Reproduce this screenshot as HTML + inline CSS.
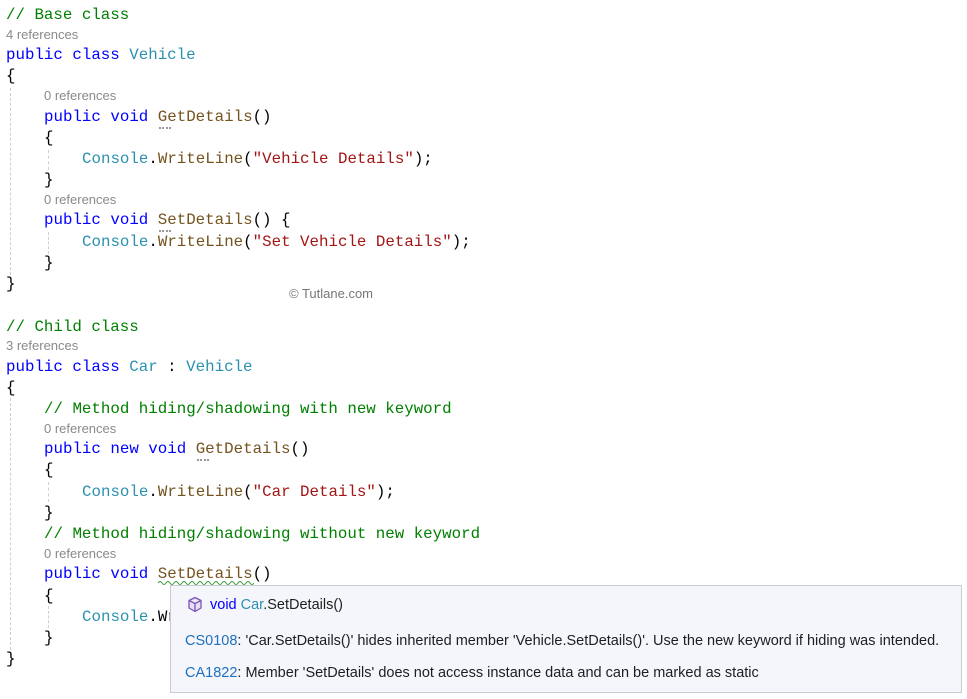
<!DOCTYPE html>
<html><head><meta charset="utf-8"><style>
body{margin:0;width:967px;height:699px;background:#fff;position:relative;overflow:hidden;font-family:"Liberation Mono",monospace;}
.l{position:absolute;white-space:pre;font-size:15.8px;line-height:20px;color:#000;margin-top:1px;}
.r{position:absolute;white-space:pre;font-family:"Liberation Sans",sans-serif;font-size:13px;line-height:16px;color:#8a8a8a;}
.k{color:#0000ff}.t{color:#2b91af}.c{color:#008000}.s{color:#a31515}.m{color:#74531f}
.g{position:absolute;width:0;border-left:1px dashed #cfcfcf;}
.dots{position:absolute;width:12px;border-top:2px dotted #999;}
.tip{position:absolute;left:170px;top:585px;width:792px;height:108px;background:#f4f6fb;border:1px solid #c9ccd3;box-sizing:border-box;font-family:"Liberation Sans",sans-serif;font-size:14.5px;color:#1e1e1e;}
.tip div{position:absolute;white-space:pre;}
.b{color:#1f6fbf}
</style></head><body>
<div class="g" style="left:10px;top:88px;height:187px"></div>
<div class="g" style="left:48px;top:150px;height:20px"></div>
<div class="g" style="left:48px;top:232px;height:22px"></div>
<div class="g" style="left:10px;top:398px;height:252px"></div>
<div class="g" style="left:48px;top:482px;height:20px"></div>
<div class="g" style="left:48px;top:606px;height:22px"></div>

<div class="l c" style="left:6px;top:4px">// Base class</div>
<div class="r" style="left:6px;top:27px">4 references</div>
<div class="l" style="left:6px;top:44px"><span class="k">public class</span> <span class="t">Vehicle</span></div>
<div class="l" style="left:6px;top:65px">{</div>
<div class="r" style="left:44px;top:88px">0 references</div>
<div class="l" style="left:44px;top:106px"><span class="k">public void</span> <span class="m">GetDetails</span>()</div>
<div class="dots" style="left:159px;top:127px"></div>
<div class="l" style="left:44px;top:127px">{</div>
<div class="l" style="left:82px;top:148px"><span class="t">Console</span>.<span class="m">WriteLine</span>(<span class="s">"Vehicle Details"</span>);</div>
<div class="l" style="left:44px;top:169px">}</div>
<div class="r" style="left:44px;top:192px">0 references</div>
<div class="l" style="left:44px;top:209px"><span class="k">public void</span> <span class="m">SetDetails</span>() {</div>
<div class="dots" style="left:159px;top:230px"></div>
<div class="l" style="left:82px;top:231px"><span class="t">Console</span>.<span class="m">WriteLine</span>(<span class="s">"Set Vehicle Details"</span>);</div>
<div class="l" style="left:44px;top:252px">}</div>
<div class="l" style="left:6px;top:273px">}</div>
<div class="r" style="left:289px;top:286px;font-size:13px;color:#777">© Tutlane.com</div>

<div class="l c" style="left:6px;top:316px">// Child class</div>
<div class="r" style="left:6px;top:338px">3 references</div>
<div class="l" style="left:6px;top:356px"><span class="k">public class</span> <span class="t">Car</span> : <span class="t">Vehicle</span></div>
<div class="l" style="left:6px;top:377px">{</div>
<div class="l c" style="left:44px;top:398px">// Method hiding/shadowing with new keyword</div>
<div class="r" style="left:44px;top:421px">0 references</div>
<div class="l" style="left:44px;top:438px"><span class="k">public new void</span> <span class="m">GetDetails</span>()</div>
<div class="dots" style="left:197px;top:459px"></div>
<div class="l" style="left:44px;top:459px">{</div>
<div class="l" style="left:82px;top:481px"><span class="t">Console</span>.<span class="m">WriteLine</span>(<span class="s">"Car Details"</span>);</div>
<div class="l" style="left:44px;top:502px">}</div>
<div class="l c" style="left:44px;top:523px">// Method hiding/shadowing without new keyword</div>
<div class="r" style="left:44px;top:546px">0 references</div>
<div class="l" style="left:44px;top:563px"><span class="k">public void</span> <span class="m">SetDetails</span>()</div>
<svg style="position:absolute;left:158px;top:580px" width="96" height="5"><path d="M0 3 Q2 0 4 3 T8 3 T12 3 T16 3 T20 3 T24 3 T28 3 T32 3 T36 3 T40 3 T44 3 T48 3 T52 3 T56 3 T60 3 T64 3 T68 3 T72 3 T76 3 T80 3 T84 3 T88 3 T92 3 T96 3" stroke="#3a9a3a" fill="none" stroke-width="1"/></svg>
<div class="l" style="left:44px;top:585px">{</div>
<div class="l" style="left:82px;top:606px"><span class="t">Console</span>.Wr</div>
<div class="l" style="left:44px;top:627px">}</div>
<div class="l" style="left:6px;top:648px">}</div>

<div class="tip">
<svg style="position:absolute;left:16px;top:10px" width="16" height="17" viewBox="0 0 16 17"><path d="M8 1.5 L14 4.5 V12 L8 15.5 L2 12 V4.5 Z M2 4.5 L8 7.5 L14 4.5 M8 7.5 V15.5" fill="#e8def5" stroke="#7a55b5" stroke-width="1.3" stroke-linejoin="round"/></svg>
<div style="left:39px;top:11px"><span style="color:#0000ff">void</span> <span class="t">Car</span>.SetDetails()</div>
<div style="left:14px;top:47px"><span class="b">CS0108</span>: 'Car.SetDetails()' hides inherited member 'Vehicle.SetDetails()'. Use the new keyword if hiding was intended.</div>
<div style="left:14px;top:79px"><span class="b">CA1822</span>: Member 'SetDetails' does not access instance data and can be marked as static</div>
</div>
</body></html>
